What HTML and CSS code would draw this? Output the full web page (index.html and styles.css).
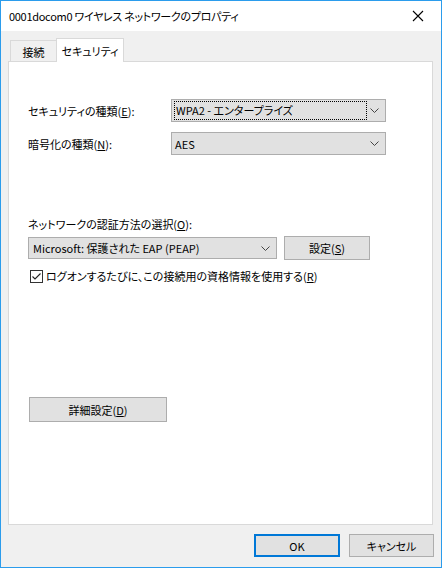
FILE: index.html
```html
<!DOCTYPE html>
<html lang="ja">
<head>
<meta charset="utf-8">
<link rel="stylesheet" href="styles.css">
</head>
<body>
<div class="window">
  <div class="titlebar">
    <span class="title">0001docom0 ワイヤレス ネットワークのプロパティ</span>
    <svg class="close" width="12" height="12" viewBox="0 0 12 12"><path d="M1 1 L11 11 M11 1 L1 11" stroke="#000" stroke-width="1.1" fill="none"/></svg>
  </div>
  <div class="client">
    <div class="tabs">
      <div class="tab">接続</div>
      <div class="tab active">セキュリティ</div>
    </div>
    <div class="panel">
      <div class="grid">
        <div class="label">セキュリティの種類(<u>E</u>):</div>
        <div class="combo focus"><span class="value"><span class="focusrect">WPA2 - エンタープライズ</span></span><svg class="chev" width="9" height="5" viewBox="0 0 9 5"><path d="M0.5 0.5 L4.5 4.5 L8.5 0.5" stroke="#444" fill="none"/></svg></div>
        <div class="label">暗号化の種類(<u>N</u>):</div>
        <div class="combo"><span class="value">AES</span><svg class="chev" width="9" height="5" viewBox="0 0 9 5"><path d="M0.5 0.5 L4.5 4.5 L8.5 0.5" stroke="#444" fill="none"/></svg></div>
      </div>
      <div class="label auth-label">ネットワークの認証方法の選択(<u>O</u>):</div>
      <div class="auth-row">
        <div class="combo auth"><span class="value">Microsoft: 保護された EAP (PEAP)</span><svg class="chev" width="9" height="5" viewBox="0 0 9 5"><path d="M0.5 0.5 L4.5 4.5 L8.5 0.5" stroke="#444" fill="none"/></svg></div>
        <button class="btn settings">設定(<u>S</u>)</button>
      </div>
      <label class="check">
        <span class="box"><svg width="11" height="11" viewBox="0 0 11 11"><path d="M1.5 5.5 L4 8 L9.5 2.5" stroke="#222" stroke-width="1.1" fill="none"/></svg></span>
        <span>ログオンするたびに、この接続用の資格情報を使用する(<u>R</u>)</span>
      </label>
      <button class="btn advanced">詳細設定(<u>D</u>)</button>
    </div>
    <div class="footer">
      <button class="btn ok">OK</button>
      <button class="btn cancel">キャンセル</button>
    </div>
  </div>
</div>
</body>
</html>
```
FILE: styles.css
```css
* { box-sizing: border-box; }
html, body { margin: 0; padding: 0; }
body {
  width: 442px;
  height: 568px;
  font-family: "Noto Sans CJK JP", "Noto Sans", sans-serif;
  font-size: 11px;
  color: #000;
  font-feature-settings: "palt";
}
u { text-decoration: underline; text-underline-offset: 1px; }
.window {
  width: 442px;
  height: 568px;
  border: 1px solid #2b9cec;
  display: flex;
  flex-direction: column;
  background: #f0f0f0;
}
.titlebar {
  height: 30px;
  background: #fff;
  display: flex;
  align-items: center;
  padding: 0 0 0 8px;
  flex: none;
}
.title { flex: 1; line-height: 16px; font-size: 11px; letter-spacing: -0.3px; }
.close { margin-right: 17px; }
.client {
  flex: 1;
  display: flex;
  flex-direction: column;
  padding: 7px 8px 0 7px;
}
.tabs {
  display: flex;
  align-items: flex-end;
  height: 24px;
  padding-left: 2px;
  position: relative;
  z-index: 1;
  margin-bottom: -1px;
}
.tab {
  width: 47px;
  height: 21px;
  border: 1px solid #d9d9d9;
  border-bottom: none;
  background: #f0f0f0;
  text-align: center;
  line-height: 22px;
  margin-bottom: 1px;
}
.tab.active {
  width: 68px;
  height: 24px;
  background: #fff;
  margin-bottom: 0;
  line-height: 24px;
  margin-left: -1px;
}
.panel {
  width: 425px;
  height: 464px;
  background: #fff;
  border: 1px solid #d9d9d9;
  padding: 37px 0 0 19px;
  display: flex;
  flex-direction: column;
  align-items: flex-start;
}
.grid {
  display: grid;
  grid-template-columns: 143px 215px;
  row-gap: 10px;
  align-items: center;
}
.label { line-height: 16px; }
.combo {
  height: 23px;
  background: #e1e1e1;
  border: 1px solid #adadad;
  display: flex;
  align-items: center;
  padding: 0 6px 0 3px;
}
.combo .value { flex: 1; line-height: 16px; white-space: nowrap; }
.focusrect {
  display: block;
  width: 191px;
  height: 17px;
  outline: 1px dotted #000;
  outline-offset: 0;
  padding-left: 1px;
  line-height: 17px;
}
.chev { flex: none; }
.auth-label { margin-top: 61px; }
.auth-row {
  display: flex;
  align-items: center;
  gap: 7px;
  margin-top: 4px;
}
.combo.auth { width: 249px; height: 22px; padding-left: 4px; }
.btn {
  font: inherit;
  font-feature-settings: "palt";
  color: #000;
  background: #e1e1e1;
  border: 1px solid #adadad;
  padding: 0;
  margin: 0;
  line-height: 16px;
}
.settings { width: 86px; height: 24px; }
.check {
  display: flex;
  align-items: center;
  gap: 3px;
  margin-top: 8px;
  margin-left: 2px;
  line-height: 16px;
}
.box {
  width: 13px;
  height: 13px;
  border: 1px solid #333;
  background: #fff;
  display: flex;
  align-items: center;
  justify-content: center;
}
.advanced { width: 138px; height: 25px; margin-top: 113px; margin-left: 1px; }
.footer {
  display: flex;
  justify-content: flex-end;
  gap: 9px;
  padding: 9px 0 0 0;
}
.ok { width: 86px; height: 23px; border: 2px solid #0078d7; }
.cancel { width: 85px; height: 23px; margin-right: -1px; }
```
